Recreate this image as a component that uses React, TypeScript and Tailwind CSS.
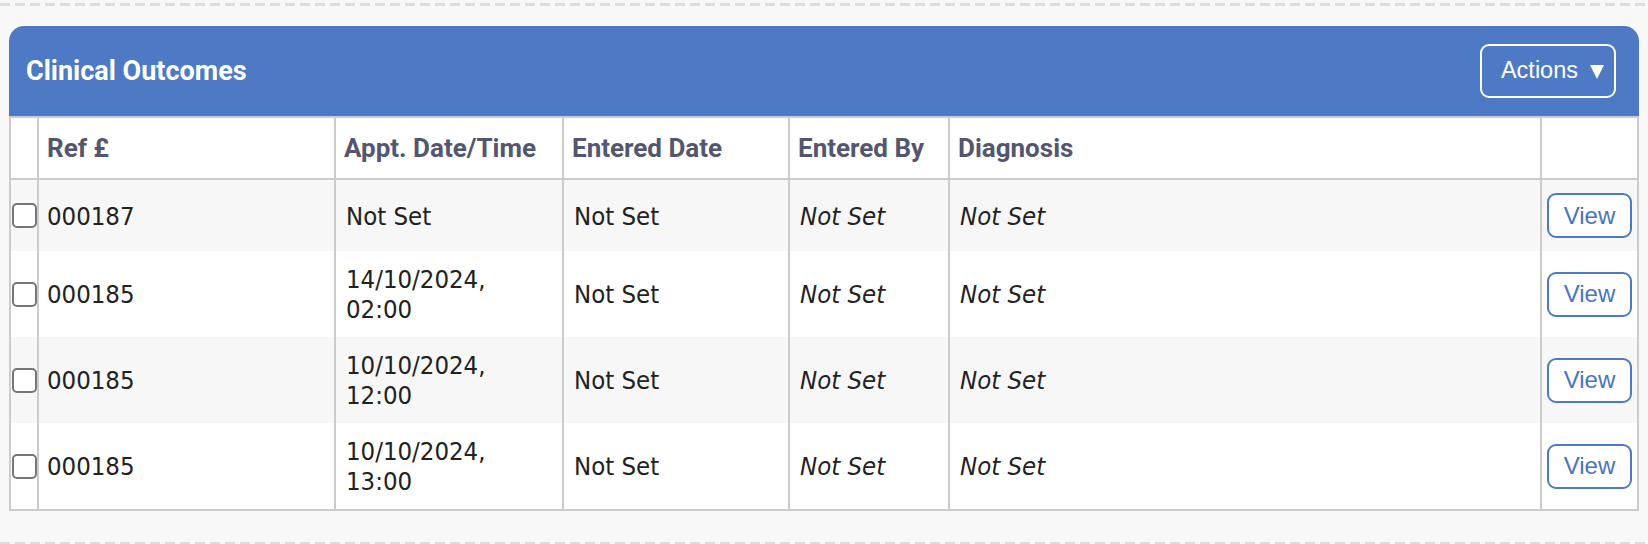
import React from 'react';

type Row = {
  ref: string;
  appt: string[];
  entered: string;
  by: string;
  diagnosis: string;
};

const ROWS: Row[] = [
  { ref: '000187', appt: ['Not Set'], entered: 'Not Set', by: 'Not Set', diagnosis: 'Not Set' },
  { ref: '000185', appt: ['14/10/2024,', '02:00'], entered: 'Not Set', by: 'Not Set', diagnosis: 'Not Set' },
  { ref: '000185', appt: ['10/10/2024,', '12:00'], entered: 'Not Set', by: 'Not Set', diagnosis: 'Not Set' },
  { ref: '000185', appt: ['10/10/2024,', '13:00'], entered: 'Not Set', by: 'Not Set', diagnosis: 'Not Set' },
];

const HEADERS = ['Ref £', 'Appt. Date/Time', 'Entered Date', 'Entered By', 'Diagnosis'];

const Dashes: React.FC = () => (
  <div className="h-[3px] w-full bg-[repeating-linear-gradient(90deg,#dddddd_0_10px,transparent_10px_15px)]" />
);

export default function App() {
  return (
    <div className="w-[1648px] h-[544px] overflow-hidden bg-[#f8f8f8] pt-[3px]">
      <Dashes />

      <div className="px-[9px] pt-[20px] pb-[31px]">
        {/* Panel header */}
        <div className="h-[90px] rounded-t-[15px] bg-[#4e79c4] flex items-center justify-between pl-[17px] pr-[23px]">
          <h2 className="text-white text-[27px] font-bold font-['Roboto',sans-serif] font-stretch-normal">
            Clinical Outcomes
          </h2>
          <button className="h-[54px] w-[136px] rounded-[9px] border-2 border-white flex items-center justify-end gap-[12px] pr-[10px] text-white text-[23.5px] font-['Liberation_Sans',Arial,sans-serif]">
            <span>Actions</span>
            <svg width="14" height="14" viewBox="0 0 14 14" className="mt-[1px]">
              <polygon points="0,0 14,0 7,14" fill="white" />
            </svg>
          </button>
        </div>

        {/* Table */}
        <table className="w-[1630px] table-fixed border-collapse border-2 border-[#cccccc] text-[#222222] text-[25.5px] leading-[30px] font-['DejaVu_Sans_Condensed','DejaVu_Sans',sans-serif]">
          <colgroup>
            <col className="w-[28px]" />
            <col className="w-[297px]" />
            <col className="w-[228px]" />
            <col className="w-[226px]" />
            <col className="w-[160px]" />
            <col className="w-[592px]" />
            <col />
          </colgroup>
          <thead>
            <tr className="bg-white">
              <th className="border-2 border-[#cccccc]" />
              {HEADERS.map((h) => (
                <th
                  key={h}
                  className="border-2 border-[#cccccc] px-[8px] py-[15px] text-left font-bold text-[#535670] text-[26px] font-['Roboto',sans-serif] font-stretch-normal whitespace-nowrap"
                >
                  {h}
                </th>
              ))}
              <th className="border-2 border-[#cccccc]" />
            </tr>
          </thead>
          <tbody className="font-stretch-condensed">
            {ROWS.map((r, i) => (
              <tr key={i} className={i % 2 === 0 ? 'bg-[#f7f7f7]' : 'bg-white'}>
                <td className="border-x-2 border-[#cccccc] align-middle pl-[1px]">
                  <input
                    type="checkbox"
                    className="appearance-none block w-[25px] h-[25px] rounded-[5px] border-2 border-[#767676] bg-white"
                  />
                </td>
                <td className="border-x-2 border-[#cccccc] px-[8px] py-[13px] align-middle">{r.ref}</td>
                <td className="border-x-2 border-[#cccccc] px-[10px] py-[13px] align-middle">
                  {r.appt.map((line, j) => (
                    <div key={j}>{line}</div>
                  ))}
                </td>
                <td className="border-x-2 border-[#cccccc] px-[10px] py-[13px] align-middle">{r.entered}</td>
                <td className="border-x-2 border-[#cccccc] px-[10px] py-[13px] align-middle italic">{r.by}</td>
                <td className="border-x-2 border-[#cccccc] px-[10px] py-[13px] align-middle italic">{r.diagnosis}</td>
                <td className="border-x-2 border-[#cccccc] py-[13px] align-middle">
                  <button className="mx-auto block w-[85px] h-[45px] rounded-[9px] border-2 border-[#4e79c4] bg-white text-[#4a74c0] text-[24px] font-['Liberation_Sans',Arial,sans-serif] font-stretch-normal">
                    View
                  </button>
                </td>
              </tr>
            ))}
          </tbody>
        </table>
      </div>

      <Dashes />
    </div>
  );
}
